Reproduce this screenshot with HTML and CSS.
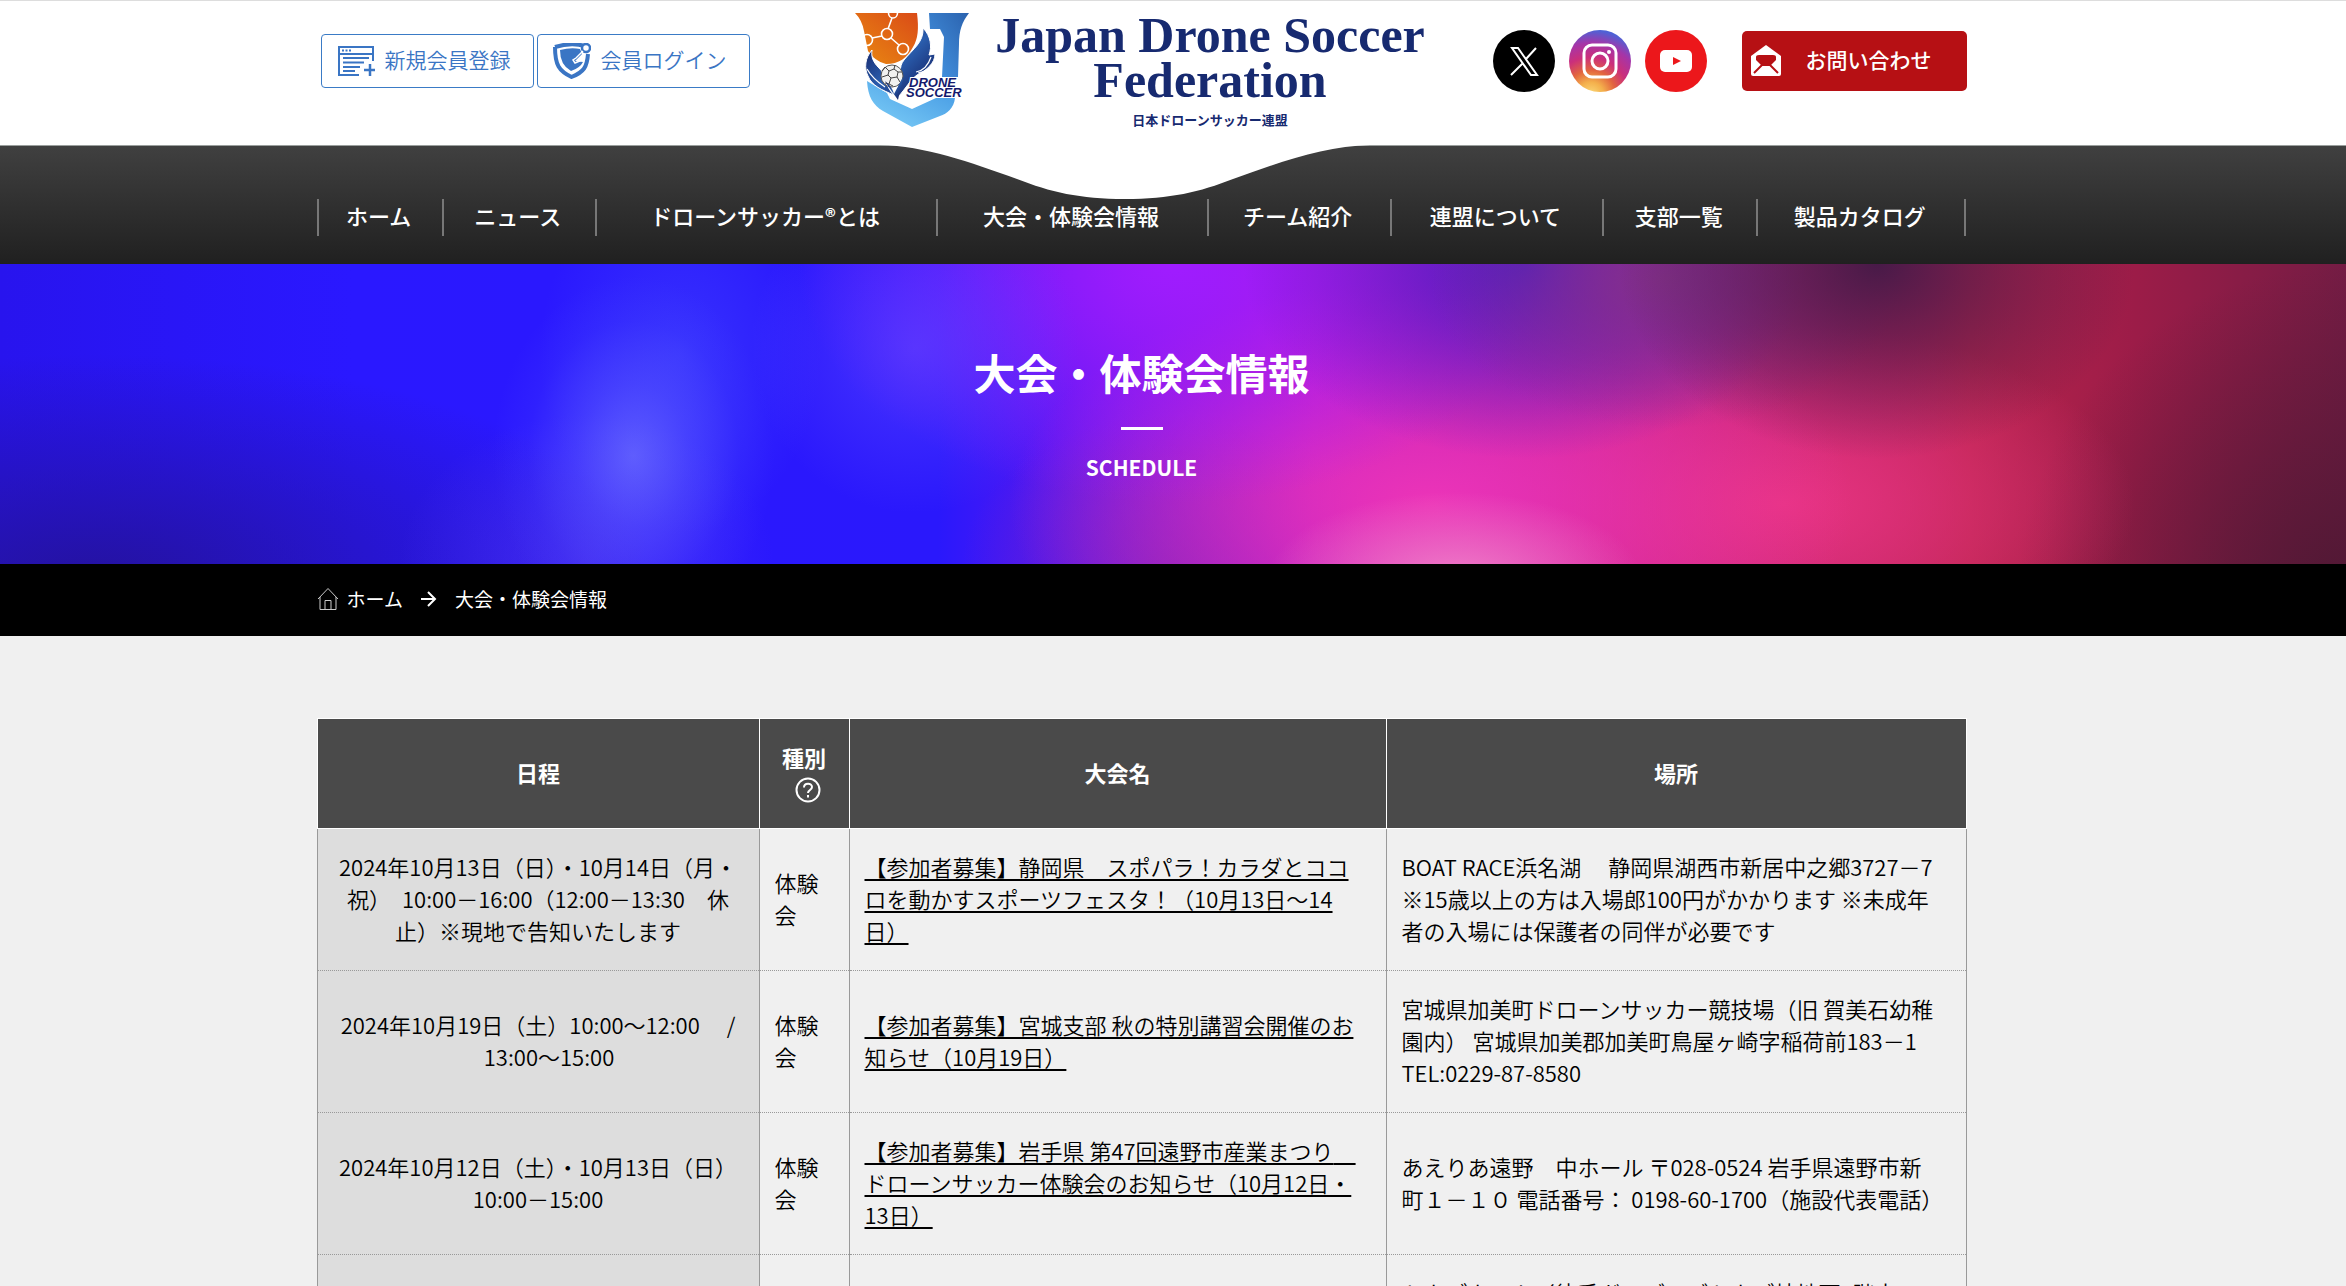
FILE: index.html
```html
<!DOCTYPE html>
<html lang="ja">
<head>
<meta charset="utf-8">
<meta name="viewport" content="width=device-width, initial-scale=1">
<title>大会・体験会情報 | 日本ドローンサッカー連盟</title>
<link rel="stylesheet" href="styles.css">
</head>
<body>
<header class="site-header">
  <div class="container header-inner">
    <div class="member-links">
      <a class="member-link" href="#register">
        <svg width="38" height="32" viewBox="0 0 38 32" fill="none" stroke="currentColor" stroke-width="2"><path d="M22 30H2V2h34v14M2 9h34"/><path d="M5 5.500h10" stroke-dasharray="2 1.500"/><path d="M6 13h26M6 17.500h21M6 22h17M6 26h12"/><path d="M33 19v12M27 25h12" stroke-width="2.500"/></svg>
        <span>新規会員登録</span>
      </a>
      <a class="member-link" href="#login">
        <svg width="38" height="36" viewBox="0 0 38 36"><path d="M2 4Q18-1 32 3M35 11C34 24 31 29 18.500 34 6 28 2 22 2 4" fill="none" stroke="currentColor" stroke-width="4"/><path d="M7 7q11-3 20-1l2 5-7 7 8 1q-3 6-12 9Q7 22 7 7z" fill="currentColor"/><circle cx="33" cy="5" r="4" fill="#fff" stroke="currentColor" stroke-width="2.500"/><path d="M30 8 23 15l-3 2 2 3 7-3" fill="none" stroke="#fff" stroke-width="1.500"/></svg>
        <span>会員ログイン</span>
      </a>
    </div>
    <a class="brand" href="#home">
      <svg class="emblem" width="116" height="116" viewBox="0 0 116 116">
        <defs>
          <linearGradient id="orange" x1="0" y1="1" x2="1" y2="0"><stop offset="0" stop-color="#e98a12"/><stop offset="1" stop-color="#da4b17"/></linearGradient>
          <linearGradient id="blue" x1="0" y1="1" x2="1" y2="0"><stop offset="0" stop-color="#4596e4"/><stop offset="1" stop-color="#2b62ae"/></linearGradient>
          <linearGradient id="sky" x1="0" y1="1" x2="1" y2="0"><stop offset="0" stop-color="#7fd0f8"/><stop offset="1" stop-color="#4196e2"/></linearGradient>
          <linearGradient id="wing" x1="0" y1="0" x2="1" y2="1"><stop offset="0" stop-color="#101453"/><stop offset=".5" stop-color="#2a5dad"/><stop offset="1" stop-color="#101453"/></linearGradient>
        </defs>
        <path fill="url(#orange)" d="M0 0h62c2 16 1 26-4 34-6 11-14 17-27 17-8-2-14-7-18-13L9 18Q7 7 0 0z"/>
        <g fill="none" stroke="#fff" stroke-width="1.600"><path d="M33.500 0a4.500 5 0 0 0 9 0"/><circle cx="32" cy="21" r="5.500"/><circle cx="12" cy="27" r="5.500"/><circle cx="48" cy="36" r="5.500"/><path d="M37 5l-4 11M27 23l-10 2M36 25l8 7"/></g>
        <path fill="url(#blue)" d="M74 0h40c-7 9-10 18-10 31l-1 33H87l2-40-4-8H75z"/>
        <path fill="url(#sky)" d="M12 68l20 12 3 6 22 10 24-11h19c-1 10-8 16-15 18L57 114 28 98C18 92 13 84 12 68z"/>
        <path fill="url(#wing)" stroke="#fff" d="M68 15c8 8 9 19 6 27l6-1c0 9-8 16-18 21-7 5-10 12-19 22V71c4-9 0-17 6-24 9-11 20-18 19-32zM17 37c-7 8-8 18-4 26 4 10 14 14 26 19C29 72 31 61 24 55c-6-6-8-11-7-18z"/>
        <path d="M76 44c-3 9-9 14-15 15M79 50c-4 7-9 9-16 10M12 56c5 9 12 14 18 18" stroke="#fff" stroke-width="1.200" fill="none"/>
        <circle cx="37" cy="63" r="11" fill="#f1f1ef" stroke="#555"/>
        <path d="M34 58l5-2 4 3-1 5-6 1-3-3zM34 58l-4-4M39 56l1-4M43 59l4 0M42 64l3 5M36 65l-2 6M33 62l-6 2M30 54l-3 4M34 71l-4-1M34 71l4 2" stroke="#444" fill="none"/>
        <path fill="url(#wing)" d="M30 68c4 3 8 8 9 13l9-17c-1 10-3 14-5 23-4-6-9-12-13-19z"/>
        <g class="emblem-text"><text x="54" y="74">DRONE</text><text x="51" y="84">SOCCER</text></g>
      </svg>
      <span class="brand-text">
        <span class="brand-name">Japan Drone Soccer<br>Federation</span>
        <span class="brand-sub">日本ドローンサッカー連盟</span>
      </span>
    </a>
    <div class="header-actions">
      <a class="social" href="#x" aria-label="X"><svg width="62" height="62" viewBox="0 0 62 62"><circle cx="31" cy="31" r="31"/><path fill="none" stroke="#fff" stroke-width="2" d="M19 18h6l19 27h-6zM43 18 33 29M29 34 18 45"/></svg></a>
      <a class="social" href="#instagram" aria-label="Instagram"><svg width="62" height="62" viewBox="0 0 62 62"><defs><radialGradient id="ig" cx=".35" cy="1.050" r="1.050"><stop offset="0" stop-color="#fbdc7c"/><stop offset=".2" stop-color="#f4b04c"/><stop offset=".38" stop-color="#e2653f"/><stop offset=".58" stop-color="#cb2f7b"/><stop offset=".8" stop-color="#a535a8"/><stop offset="1" stop-color="#4d62d6"/></radialGradient></defs><circle cx="31" cy="31" r="31" fill="url(#ig)"/><g fill="none" stroke="#fff" stroke-width="3"><rect x="15" y="15" width="32" height="32" rx="8"/><circle cx="31" cy="31" r="8"/></g><circle cx="40" cy="22" r="2" fill="#fff"/></svg></a>
      <a class="social" href="#youtube" aria-label="YouTube"><svg width="62" height="62" viewBox="0 0 62 62"><circle cx="31" cy="31" r="31" fill="#ec171b"/><rect x="15" y="20" width="32" height="22" rx="5" fill="#fff"/><path fill="#ec171b" d="M28 27v8l8-4z"/></svg></a>
      <a class="contact" href="#contact">
        <svg width="32" height="32" viewBox="0 0 32 32"><path fill="#fff" d="M16 0l15 11v18q0 2-2 2H3q-2 0-2-2V11z"/><path fill="#b61014" d="M6 12q0-2 3-2h14q3 0 3 2v3l-6 6h-8l-6-6z"/><path d="M12 20l-8 8M20 20l8 8" stroke="#b61014" stroke-width="2"/></svg>
        <span>お問い合わせ</span>
      </a>
    </div>
  </div>
</header>

<nav class="main-nav" aria-label="メインメニュー">
  <svg class="notch" width="490" height="55" viewBox="0 -1 490 55"><path fill="#fff" d="M0-1C45 0 90 16 137 33 170 46 200 53 245 53S320 46 353 33C400 16 445 0 490-1z"/></svg>
  <ul class="container nav-list">
    <li><a href="#home">ホーム</a></li>
    <li><a href="#news">ニュース</a></li>
    <li><a href="#about">ドローンサッカー<span class="mark">®</span>とは</a></li>
    <li><a href="#schedule">大会・体験会情報</a></li>
    <li><a href="#team">チーム紹介</a></li>
    <li><a href="#federation">連盟について</a></li>
    <li><a href="#branch">支部一覧</a></li>
    <li><a href="#catalog">製品カタログ</a></li>
  </ul>
</nav>

<section class="hero">
  <h1>大会・体験会情報</h1>
  <p>SCHEDULE</p>
</section>

<nav class="breadcrumb" aria-label="パンくず">
  <div class="container crumbs">
    <a href="#home"><svg width="22" height="24" viewBox="0 0 22 24" fill="none" stroke="#ccc"><path d="M1 12 11 1.500 21 12M3 10v12.500h16V10M8 22v-8.500h6V22"/></svg>ホーム</a>
    <svg width="16" height="18" viewBox="0 0 16 18" fill="none" stroke="#fff" stroke-width="2"><path d="M0 9h14M7 2l7 7-7 7"/></svg>
    <span>大会・体験会情報</span>
  </div>
</nav>

<main class="content">
  <table class="container schedule">
    <colgroup><col class="col-date"><col class="col-type"><col class="col-name"><col class="col-place"></colgroup>
    <thead>
      <tr>
        <th scope="col">日程</th>
        <th scope="col">種別<a class="help" href="#help" aria-label="種別について"><svg width="26" height="26" viewBox="0 0 26 26" fill="none" stroke="#fff" stroke-width="2"><circle cx="13" cy="13" r="11.500"/><path d="M9 10.500c0-5 8-5 8-.5 0 3-4 3-4 6"/><path d="M13 18v2.500"/></svg></a></th>
        <th scope="col">大会名</th>
        <th scope="col">場所</th>
      </tr>
    </thead>
    <tbody>
      <tr>
        <td>2024年10月13日（日）・10月14日（月・祝）　10:00－16:00（12:00－13:30　休止）※現地で告知いたします</td>
        <td>体験会</td>
        <td><a href="#e1">【参加者募集】静岡県　スポパラ！カラダとココロを動かすスポーツフェスタ！（10月13日〜14日）</a></td>
        <td>BOAT RACE浜名湖　 静岡県湖西市新居中之郷3727－7 ※15歳以上の方は入場郎100円がかかります ※未成年者の入場には保護者の同伴が必要です</td>
      </tr>
      <tr>
        <td>2024年10月19日（土）10:00〜12:00　 / 　13:00〜15:00</td>
        <td>体験会</td>
        <td><a href="#e2">【参加者募集】宮城支部 秋の特別講習会開催のお知らせ（10月19日）</a></td>
        <td>宮城県加美町ドローンサッカー競技場（旧 賀美石幼稚園内） 宮城県加美郡加美町鳥屋ヶ崎字稲荷前183－1 TEL:0229-87-8580</td>
      </tr>
      <tr>
        <td>2024年10月12日（土）・10月13日（日）10:00－15:00</td>
        <td>体験会</td>
        <td><a href="#e3">【参加者募集】岩手県 第47回遠野市産業まつり　ドローンサッカー体験会のお知らせ（10月12日・13日）</a></td>
        <td>あえりあ遠野　中ホール 〒028-0524 岩手県遠野市新町１－１０ 電話番号： 0198-60-1700（施設代表電話）</td>
      </tr>
      <tr class="row-top">
        <td></td>
        <td></td>
        <td></td>
        <td>トカブカーム（徳手ガーデンズトカブ棟地下1階大</td>
      </tr>
    </tbody>
  </table>
</main>
</body>
</html>
```
FILE: styles.css
```css
* { box-sizing: border-box; }

body {
  --offset: 63px;
  margin: 0;
  background: #f0f0f0;
  color: #000;
  font-family: "Noto Sans CJK JP", sans-serif;
  font-size: 22px;
  line-height: 32px;
}

a { color: inherit; text-decoration: none; }
svg { display: block; flex: none; }

.container {
  width: 100%;
  max-width: 1650px;
  margin: 0 auto;
}

.site-header {
  border-top: 1px solid #ddd;
  background: #fff;
  padding-right: var(--offset);
}

.header-inner {
  display: flex;
  justify-content: space-between;
  height: 144px;
  padding-left: 4px;
}

.member-links { display: flex; gap: 3px; padding-top: 33px; }

.member-link {
  display: flex;
  align-items: center;
  gap: 10px;
  height: 54px;
  padding: 0 22px 4px 15px;
  border: 1px solid #3a7bc6;
  border-radius: 4px;
  color: #3a75c4;
  font-size: 21px;
  font-weight: 350;
}
.member-link svg { margin-top: 4px; }

.brand { display: flex; gap: 24px; padding: 12px 0 0 38px; }
.emblem { overflow: visible; }
.emblem-text {
  fill: #14196c;
  stroke: #fff;
  stroke-width: 2px;
  paint-order: stroke;
  font: italic bold 13px "Liberation Sans", sans-serif;
}
.brand-text { text-align: center; color: #172a70; }
.brand-name {
  display: block;
  font: bold 50px/45px "Liberation Serif", serif;
}
.brand-sub { display: block; font-size: 13px; font-weight: bold; line-height: 34px; }

.header-actions { display: flex; gap: 14px; padding-top: 29px; }
.contact {
  display: flex;
  align-items: center;
  gap: 24px;
  width: 225px;
  height: 60px;
  margin: 1px 0 0 21px;
  padding: 0 8px;
  border-radius: 5px;
  background: #b61014;
  color: #fff;
  font-size: 21px;
  font-weight: 500;
}
.contact span { padding-bottom: 4px; }

.main-nav {
  position: relative;
  padding: 53px var(--offset) 28px 0;
  border-top: 1px solid #9a9f9d;
  background: linear-gradient(#404040, #202020);
}
.notch { position: absolute; top: -1px; left: calc(50% - 293px); }

.nav-list {
  display: grid;
  grid-template-columns: 125fr 153fr 341fr 270fr 183fr 212fr 154fr 210fr;
  padding: 0;
  list-style: none;
  position: relative;
}
.nav-list li {
  height: 37px;
  padding-right: 3px;
  border-left: 2px solid #777;
  color: #fff;
  font-weight: 500;
  line-height: 32px;
  text-align: center;
  white-space: nowrap;
}
.nav-list li:last-child { border-right: 2px solid #777; }
.mark { font-size: 22px; }

.hero {
  height: 300px;
  padding: 84px var(--offset) 0 0;
  color: #fff;
  text-align: center;
  background:
    radial-gradient(ellipse 6% 60% at 27% 64%, #8088ff90, #686cff60 40%, #5458ff20 75%, #4c50ff00),
    radial-gradient(ellipse 6% 60% at 29% 30%, #4c5cff60, #4c50ff00),
    radial-gradient(ellipse 8% 50% at 25% 100%, #5c40f080, #5c40f000),
    radial-gradient(ellipse 7% 55% at 39% 28%, #6c50ff80, #6450ff40 50%, #5c50ff00),
    radial-gradient(ellipse 8% 30% at 62% 106%, #f080c8, #ef50b800),
    radial-gradient(ellipse 11% 65% at 80% 0%, #481a48, #481a4800),
    radial-gradient(ellipse 10% 50% at 71% 5%, #84308a, #84308a00),
    radial-gradient(ellipse 12% 65% at 65% 0%, #4b1cc4, #4b1cc400),
    radial-gradient(ellipse 16% 80% at 50% 0%, #a01cff, #a01cff00),
    radial-gradient(ellipse 18% 75% at 61% 80%, #ec34b8, #e828b000),
    radial-gradient(ellipse 15% 60% at 76% 80%, #e83480, #e82c6800),
    radial-gradient(ellipse 9% 50% at 50% 100%, #7c22b0a0, #7c22b000),
    radial-gradient(ellipse 24% 75% at 4% 105%, #2412a0, #2412a000),
    radial-gradient(ellipse 14% 110% at 100% 110%, #501834, #50183400),
    linear-gradient(90deg, #2814ee 0%, #2a18ff 15%, #2a18fc 40%, #6418ee 47%, #b81cd0 56%, #c0208c 70%, #b8244c 84%, #9c1c48 91%, #741c44 100%);
}
.hero h1 {
  margin: 0;
  font-size: 42px;
  font-weight: bold;
  line-height: 48px;
}
.hero h1::after {
  content: "";
  display: block;
  width: 42px;
  height: 3px;
  margin: 31px auto 24px;
  background: #fff;
  box-sizing: content-box;
  border-right: 0;
}
.hero p { margin: 0; font-size: 21px; font-weight: bold; line-height: 26px; }

.breadcrumb { background: #000; color: #fff; padding-right: var(--offset); font-size: 19px; }
.crumbs { display: flex; align-items: center; gap: 18px; height: 72px; padding-bottom: 2px; }
.crumbs a { display: flex; align-items: center; gap: 8px; }

.content { padding: 82px var(--offset) 80px 0; }

.schedule { border-collapse: collapse; table-layout: fixed; }
.col-date { width: 442px; }
.col-type { width: 90px; }
.col-name { width: 537px; }

.schedule th {
  height: 110px;
  padding: 0 0 4px;
  border: 1px solid #fff;
  background: #4a4a4a;
  color: #fff;
  font-weight: bold;
}
.help { display: block; width: 26px; margin: 4px auto 0; padding-left: 4px; }
.help svg { overflow: visible; }

.schedule td {
  height: 142px;
  padding: 21px 24px 24px 15px;
  border: 1px solid #999;
  border-top: 1px dotted #999;
  border-bottom: 1px dotted #999;
  font-weight: 350;
}
.schedule tbody tr:first-child td { border-top-color: #fff; }
.schedule td:first-child { padding: 21px 15px 24px; background: #ddd; text-align: center; }
.schedule .row-top td { vertical-align: top; }
.schedule td a {
  text-decoration: underline;
  text-decoration-thickness: 2px;
  text-underline-offset: 3px;
  text-decoration-skip-ink: none;
}
```
